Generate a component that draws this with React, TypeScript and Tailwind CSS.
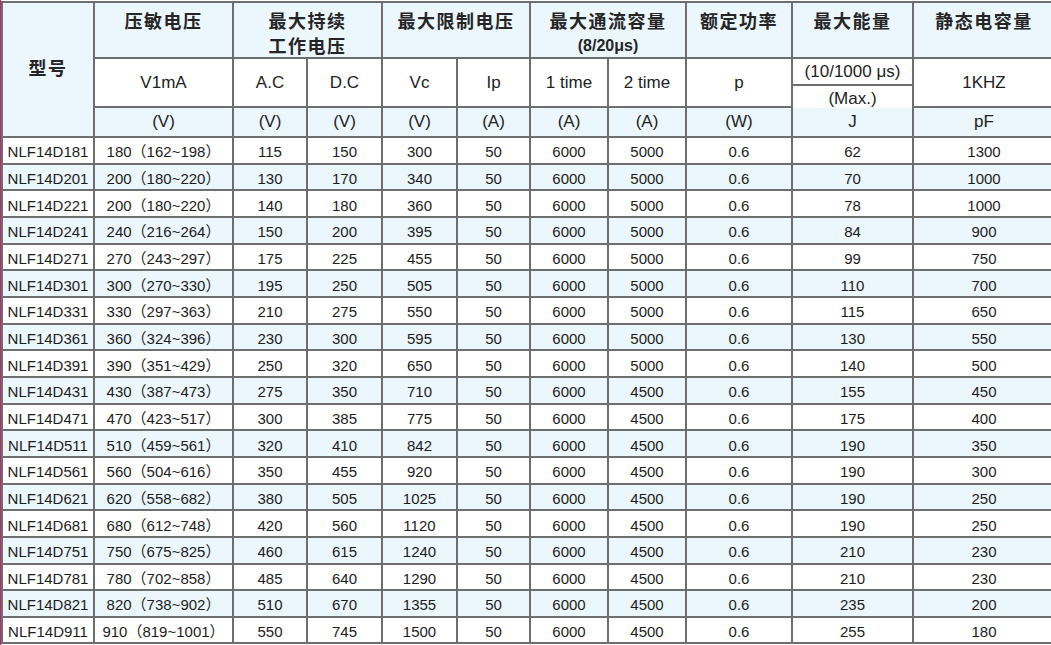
const rows: string[][] = [
  ["NLF14D181", "180（162~198）", "115", "150", "300", "50", "6000", "5000", "0.6", "62", "1300"],
  ["NLF14D201", "200（180~220）", "130", "170", "340", "50", "6000", "5000", "0.6", "70", "1000"],
  ["NLF14D221", "200（180~220）", "140", "180", "360", "50", "6000", "5000", "0.6", "78", "1000"],
  ["NLF14D241", "240（216~264）", "150", "200", "395", "50", "6000", "5000", "0.6", "84", "900"],
  ["NLF14D271", "270（243~297）", "175", "225", "455", "50", "6000", "5000", "0.6", "99", "750"],
  ["NLF14D301", "300（270~330）", "195", "250", "505", "50", "6000", "5000", "0.6", "110", "700"],
  ["NLF14D331", "330（297~363）", "210", "275", "550", "50", "6000", "5000", "0.6", "115", "650"],
  ["NLF14D361", "360（324~396）", "230", "300", "595", "50", "6000", "5000", "0.6", "130", "550"],
  ["NLF14D391", "390（351~429）", "250", "320", "650", "50", "6000", "5000", "0.6", "140", "500"],
  ["NLF14D431", "430（387~473）", "275", "350", "710", "50", "6000", "4500", "0.6", "155", "450"],
  ["NLF14D471", "470（423~517）", "300", "385", "775", "50", "6000", "4500", "0.6", "175", "400"],
  ["NLF14D511", "510（459~561）", "320", "410", "842", "50", "6000", "4500", "0.6", "190", "350"],
  ["NLF14D561", "560（504~616）", "350", "455", "920", "50", "6000", "4500", "0.6", "190", "300"],
  ["NLF14D621", "620（558~682）", "380", "505", "1025", "50", "6000", "4500", "0.6", "190", "250"],
  ["NLF14D681", "680（612~748）", "420", "560", "1120", "50", "6000", "4500", "0.6", "190", "250"],
  ["NLF14D751", "750（675~825）", "460", "615", "1240", "50", "6000", "4500", "0.6", "210", "230"],
  ["NLF14D781", "780（702~858）", "485", "640", "1290", "50", "6000", "4500", "0.6", "210", "230"],
  ["NLF14D821", "820（738~902）", "510", "670", "1355", "50", "6000", "4500", "0.6", "235", "200"],
  ["NLF14D911", "910（819~1001）", "550", "745", "1500", "50", "6000", "4500", "0.6", "255", "180"],
];

const blue = "bg-[#ebf6fd]";

function Head({ children, span = "" }: { children: React.ReactNode; span?: string }) {
  return (
    <div
      className={`${blue} ${span} flex flex-col items-center pt-[7px] text-[18px] leading-[25px] font-bold tracking-[1.5px] text-[#252525]`}
    >
      {children}
    </div>
  );
}

function Sub({ children }: { children: React.ReactNode }) {
  return <div className="flex items-center justify-center bg-white text-[17px] text-[#222]">{children}</div>;
}

function Unit({ children }: { children: React.ReactNode }) {
  return <div className={`${blue} flex items-center justify-center text-[17px] text-[#222]`}>{children}</div>;
}

export default function App() {
  return (
    <div className="h-[645px] w-[1051px] overflow-hidden border-l border-[#b0306e] bg-white pt-px font-['Liberation_Sans','Noto_Sans_CJK_SC',sans-serif]">
      <div className="grid w-max grid-cols-[90px_137px_72px_73px_73px_71px_76px_76px_104px_119px_140px] grid-rows-[54px_47px_28px_repeat(19,24.66px)] gap-[2px] bg-[#6e6e6e] p-[2px]">
        {/* header row 1 */}
        <div className={`${blue} row-span-3 flex items-center justify-center text-[18px] font-bold tracking-[1.5px] text-[#252525]`}>
          型号
        </div>
        <Head>压敏电压</Head>
        <Head span="col-span-2">
          <span>最大持续</span>
          <span>工作电压</span>
        </Head>
        <Head span="col-span-2">最大限制电压</Head>
        <Head span="col-span-2">
          <span>最大通流容量</span>
          <span className="text-[16px] leading-[22px] tracking-normal">(8/20μs)</span>
        </Head>
        <Head>额定功率</Head>
        <Head>最大能量</Head>
        <Head>静态电容量</Head>

        {/* header row 2 */}
        <Sub>V1mA</Sub>
        <Sub>A.C</Sub>
        <Sub>D.C</Sub>
        <Sub>Vc</Sub>
        <Sub>Ip</Sub>
        <Sub>1 time</Sub>
        <Sub>2 time</Sub>
        <Sub>p</Sub>
        <div className="flex flex-col gap-[2px] text-[17px] text-[#222]">
          <div className="flex h-[25px] items-center justify-center bg-white">(10/1000 μs)</div>
          <div className="flex flex-1 items-center justify-center bg-white pb-[3px]">(Max.)</div>
        </div>
        <Sub>1KHZ</Sub>

        {/* header row 3 */}
        <Unit>(V)</Unit>
        <Unit>(V)</Unit>
        <Unit>(V)</Unit>
        <Unit>(V)</Unit>
        <Unit>(A)</Unit>
        <Unit>(A)</Unit>
        <Unit>(A)</Unit>
        <Unit>(W)</Unit>
        <Unit>J</Unit>
        <Unit>pF</Unit>

        {rows.map((r, i) =>
          r.map((v, j) => (
            <div
              key={`${i}-${j}`}
              className={`${i % 2 ? blue : "bg-white"} flex items-center justify-center pt-[3px] text-[15px] leading-none text-[#1c1c1c]`}
            >
              {v}
            </div>
          ))
        )}
      </div>
    </div>
  );
}
